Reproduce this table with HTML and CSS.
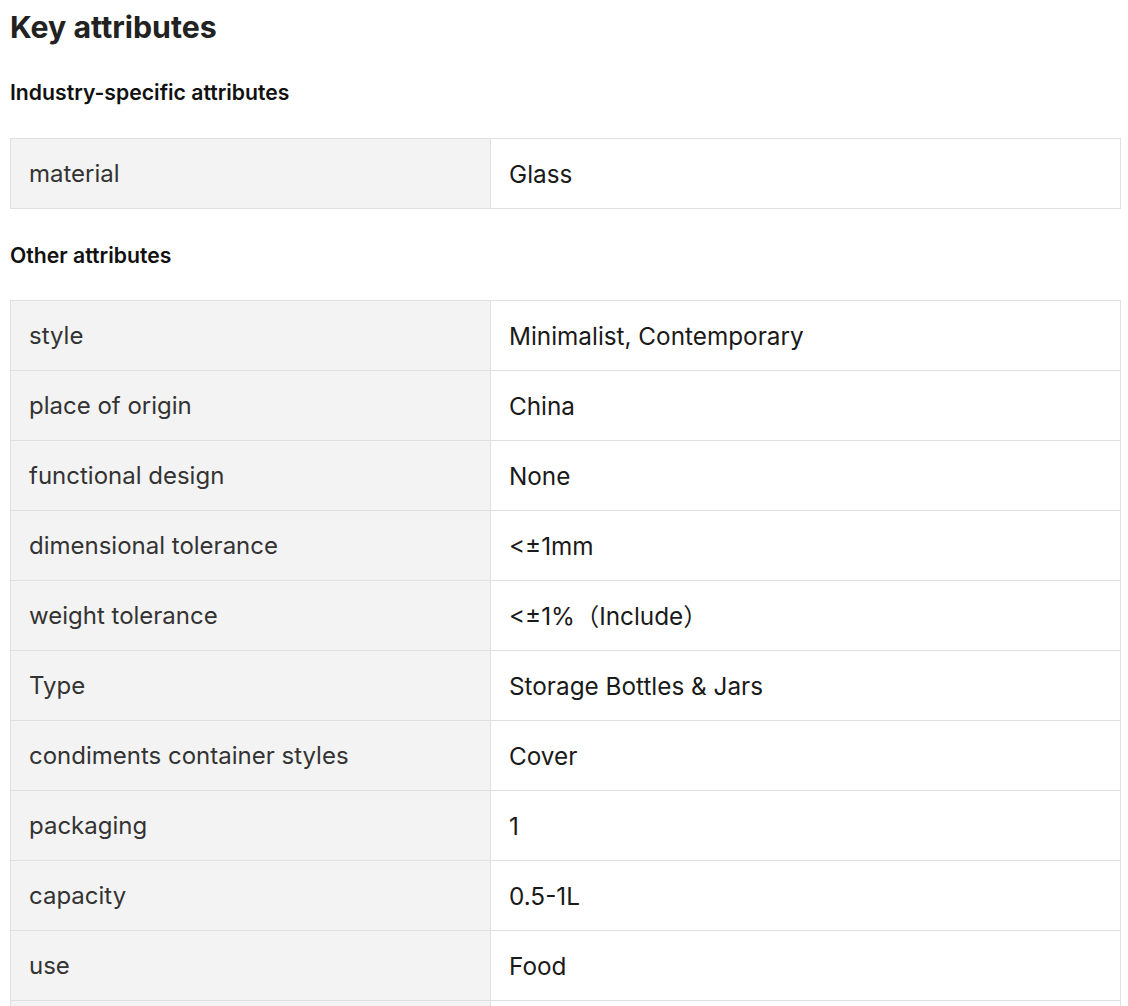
FILE: index.html
```html
<!DOCTYPE html>
<html>
<head>
<meta charset="utf-8">
<link rel="stylesheet" href="styles.css">
</head>
<body>
<div class="page">
  <h2 class="title">Key attributes</h2>
  <h3 class="subtitle first">Industry-specific attributes</h3>
  <table class="attrs">
    <tr><td class="k">material</td><td class="v">Glass</td></tr>
  </table>
  <h3 class="subtitle">Other attributes</h3>
  <table class="attrs">
    <tr><td class="k">style</td><td class="v">Minimalist, Contemporary</td></tr>
    <tr><td class="k">place of origin</td><td class="v">China</td></tr>
    <tr><td class="k">functional design</td><td class="v">None</td></tr>
    <tr><td class="k">dimensional tolerance</td><td class="v">&lt;±1mm</td></tr>
    <tr><td class="k">weight tolerance</td><td class="v">&lt;±1%（Include）</td></tr>
    <tr><td class="k">Type</td><td class="v">Storage Bottles &amp; Jars</td></tr>
    <tr><td class="k">condiments container styles</td><td class="v">Cover</td></tr>
    <tr><td class="k">packaging</td><td class="v">1</td></tr>
    <tr><td class="k">capacity</td><td class="v">0.5-1L</td></tr>
    <tr><td class="k">use</td><td class="v">Food</td></tr>
    <tr><td class="k">&nbsp;</td><td class="v">&nbsp;</td></tr>
  </table>
</div>
</body>
</html>
```

FILE: styles.css
```css
html, body {
  margin: 0;
  padding: 0;
  background: #fff;
}
body {
  font-family: Inter, "Noto Sans CJK SC", sans-serif;
  color: #222;
}
.page {
  padding: 9px 7px 0 10px;
}
.title {
  margin: 0;
  font-size: 30.3px;
  line-height: 36px;
  font-weight: 700;
  color: #222;
}
.subtitle {
  margin: 0;
  font-size: 21.2px;
  line-height: 26px;
  font-weight: 600;
  color: #111;
  padding: 33px 0 32px;
}
.subtitle.first {
  padding: 34px 0 33px 0;
}
.attrs {
  border-collapse: collapse;
  width: 1111px;
  table-layout: fixed;
}
.attrs td {
  border: 1px solid #e0e0e0;
  height: 70px;
  padding: 0 18px;
  font-size: 24px;
  line-height: 28px;
  box-sizing: border-box;
  vertical-align: middle;
  white-space: nowrap;
}
.attrs .k {
  width: 480px;
  background: #f3f3f3;
  color: #333;
}
.attrs .v {
  font-size: 24.3px;
  color: #1a1a1a;
  background: #fff;
}
```
